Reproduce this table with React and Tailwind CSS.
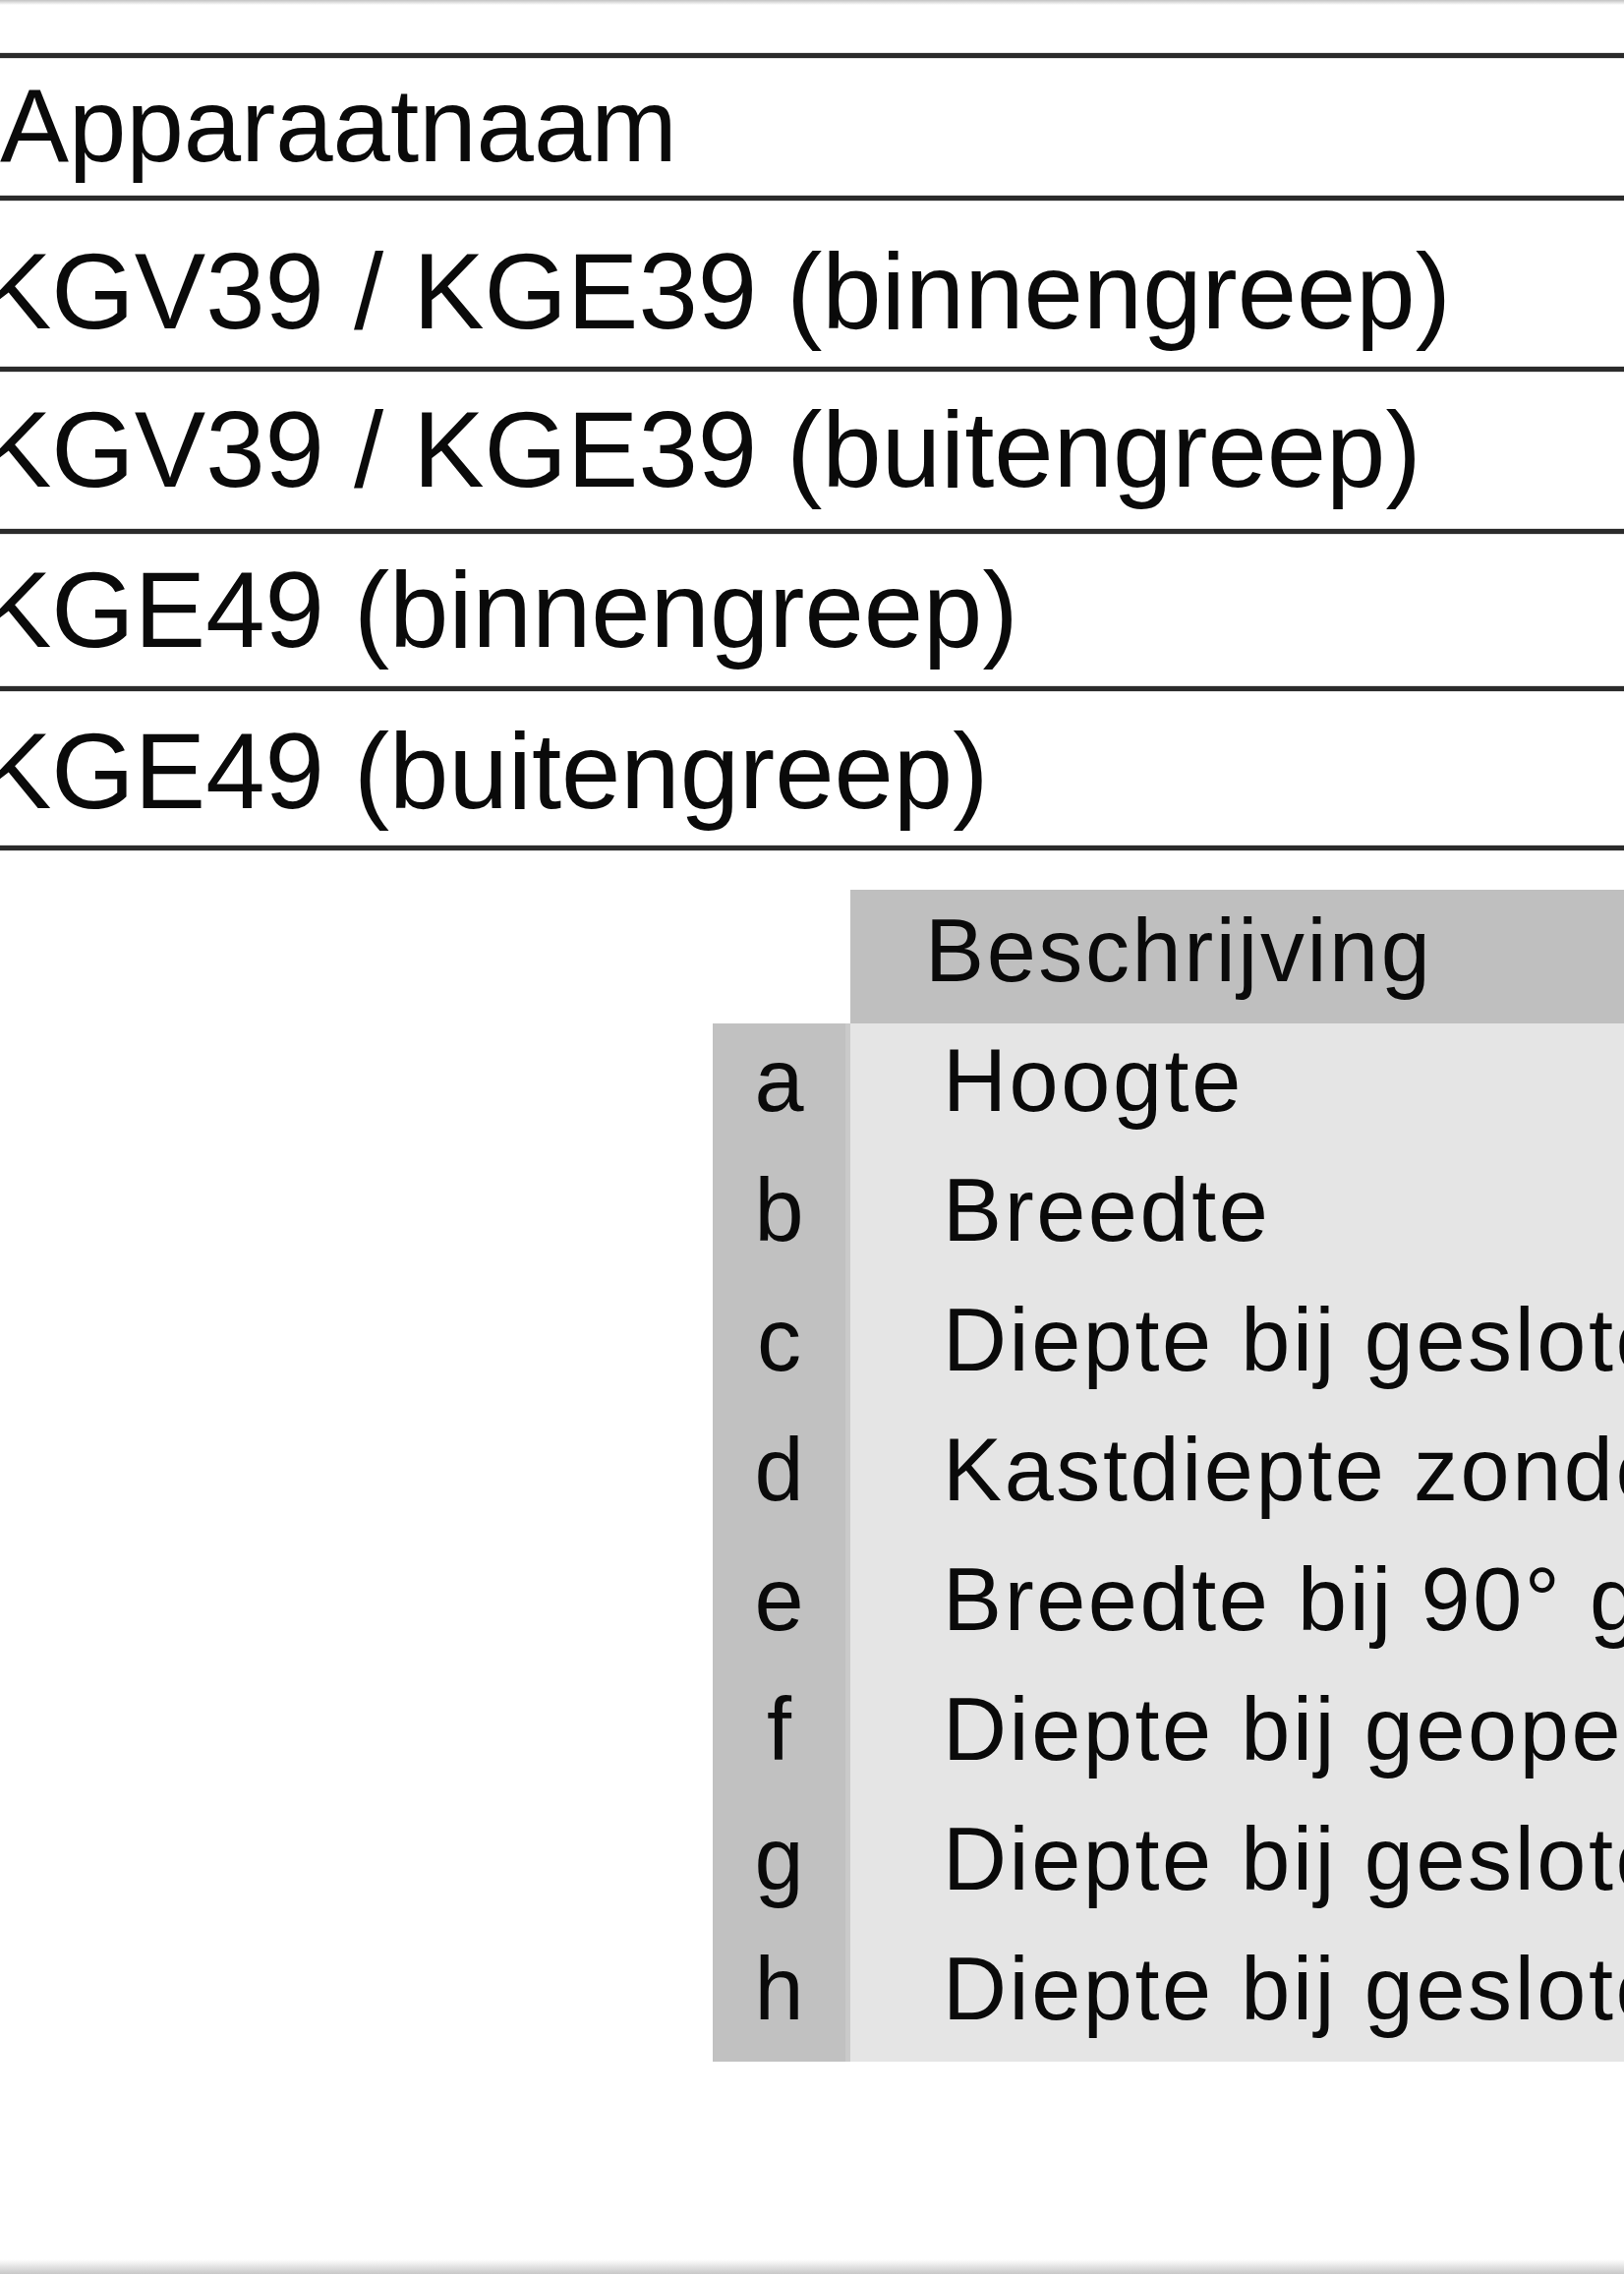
import React from 'react';

const modelRows = [
  { name: 'Apparaatnaam', h: 'h-[140px]', pt: 'pt-[16px]', pl: 'pl-0 text-[105px]' },
  { name: 'KGV39 / KGE39 (binnengreep)', h: 'h-[169px]', pt: 'pt-[39px]', pl: '-ml-[20px] text-[108.5px]' },
  { name: 'KGV39 / KGE39 (buitengreep)', h: 'h-[160px]', pt: 'pt-[26px]', pl: '-ml-[20px] text-[108.5px]' },
  { name: 'KGE49 (binnengreep)', h: 'h-[155px]', pt: 'pt-[24px]', pl: '-ml-[20px] text-[108.5px]' },
  { name: 'KGE49 (buitengreep)', h: 'h-[157px]', pt: 'pt-[28px]', pl: '-ml-[20px] text-[108.5px]' },
];

const maten = [
  ['a', 'Hoogte'],
  ['b', 'Breedte'],
  ['c', 'Diepte bij gesloten deur'],
  ['d', 'Kastdiepte zonder deur'],
  ['e', 'Breedte bij 90° geopende deur'],
  ['f', 'Diepte bij geopende deur'],
  ['g', 'Diepte bij gesloten deur'],
  ['h', 'Diepte bij gesloten deur'],
];

const Line = () => <div className="h-[5px] bg-[#2b2b2b] shadow-[0_0_1px_#555]" />;

const App = () => {
  return (
    <div
      className="w-[1652px] h-[2313px] overflow-hidden bg-white flex flex-col text-[#0a0a0a]"
      style={{ fontFamily: '"Liberation Sans", Arial, sans-serif' }}
    >
      {/* rand boven */}
      <div className="h-[5px] bg-gradient-to-b from-[#c2c2c2] to-white" />
      <div className="h-[49px]" />

      {/* tabel apparaatnamen */}
      <div className="flex flex-col">
        <Line />
        {modelRows.map((row) => (
          <React.Fragment key={row.name}>
            <div className={`${row.h} ${row.pt} overflow-hidden`}>
              <div className={`${row.pl} leading-none whitespace-nowrap`}>{row.name}</div>
            </div>
            <Line />
          </React.Fragment>
        ))}
      </div>

      {/* tabel maten */}
      <div className="mt-[40px] ml-[725px] grid grid-cols-[140px_1fr] text-[90px] tracking-[2.6px] whitespace-nowrap overflow-hidden">
        <div className="h-[136px] bg-white" />
        <div className="h-[136px] bg-[#bfbfbf] pl-[76px] leading-[125px]">Beschrijving</div>
        {maten.map(([letter, label], i) => (
          <React.Fragment key={letter + i}>
            <div className="h-[132px] bg-[#c1c1c1] border-r-[5px] border-[#cacaca] text-center leading-[117px] tracking-normal">
              {letter}
            </div>
            <div className="h-[132px] bg-[#e5e5e5] pl-[94px] leading-[117px]">{label}</div>
          </React.Fragment>
        ))}
      </div>

      {/* rand onder */}
      <div className="mt-auto h-[15px] bg-gradient-to-b from-white to-[#c8c8c8]" />
    </div>
  );
};

export default App;
